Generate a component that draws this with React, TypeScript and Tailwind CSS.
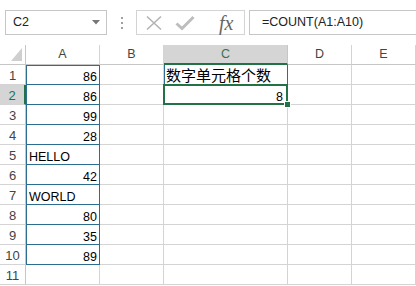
import React from 'react';

const cols = ['A', 'B', 'C', 'D', 'E'];
const colA: (string | number)[] = [86, 86, 99, 28, 'HELLO', 42, 'WORLD', 80, 35, 89, ''];

const blue = 'border-[#2c6e91]';

function Cell({ row, col }: { row: number; col: number }) {
    // col: 0 = A ... 4 = E
    const base = 'h-[20px] border-r border-b flex items-end leading-[14px] text-[12.5px] text-black';
    if (col === 0) {
        const v = colA[row - 1];
        if (row <= 10) {
            const isNum = typeof v === 'number';
            return (
                <div
                    className={`${base} ${blue} ${row === 1 ? 'shadow-[inset_1px_1px_0_#2c6e91]' : 'shadow-[inset_1px_0_0_#2c6e91]'} ${isNum ? 'justify-end pr-[2px]' : 'pl-[3px]'}`}
                >
                    {v}
                </div>
            );
        }
        return <div className={`${base} border-[#d4d4d4]`} />;
    }
    if (col === 2 && row === 1) {
        return (
            <div className={`${base} ${blue} shadow-[inset_1px_0_0_#2c6e91] pl-[2px] pb-[1px] text-[15px] font-['Liberation_Sans','Noto_Sans_CJK_SC',sans-serif]`}>
                数字单元格个数
            </div>
        );
    }
    if (col === 2 && row === 2) {
        return (
            <div className={`${base} border-[#d4d4d4] relative justify-end pr-[4px]`}>
                8
                <div className="absolute left-[-1px] top-[-1px] right-[-1px] bottom-[-1px] border-2 border-[#217346] z-10" />
                <div className="absolute right-[-4px] bottom-[-4px] w-[7px] h-[7px] bg-[#217346] border border-white z-20" />
            </div>
        );
    }
    return <div className={`${base} border-[#d4d4d4]`} />;
}

export default function App() {
    const rows = Array.from({ length: 11 }, (_, i) => i + 1);
    return (
        <div className="w-[416px] h-[286px] bg-white overflow-hidden font-['Liberation_Sans',sans-serif] text-[#222]">
            {/* formula bar */}
            <div className="h-[45px] flex items-start pt-[10px]">
                <div className="ml-[5px] w-[102px] h-[25px] border border-[#c6c6c6] flex items-center pl-[7px] pr-[6px] text-[12.5px]">
                    <span className="flex-1">C2</span>
                    <svg width="8" height="5" viewBox="0 0 8 5">
                        <path d="M0 0 L8 0 L4 4.5 Z" fill="#777" />
                    </svg>
                </div>
                <div className="ml-[14px] mt-[7px] flex flex-col gap-[3px]">
                    <div className="w-[2px] h-[2px] bg-[#a0a0a0]" />
                    <div className="w-[2px] h-[2px] bg-[#a0a0a0]" />
                    <div className="w-[2px] h-[2px] bg-[#a0a0a0]" />
                </div>
                <div className="ml-[13px] w-[109px] h-[25px] border border-[#d4d4d4] flex items-center">
                    <svg className="ml-[8px]" width="18" height="16" viewBox="0 0 18 16">
                        <path d="M2 1.5 L16 14.5 M16 1.5 L2 14.5" stroke="#b4b4b4" strokeWidth="1.6" fill="none" />
                    </svg>
                    <svg className="ml-[12px]" width="20" height="16" viewBox="0 0 20 16">
                        <path d="M1.5 8.5 L7 13.5 L18.5 2" stroke="#bdbdbd" strokeWidth="3" fill="none" />
                    </svg>
                    <span className="ml-[24px] text-[20px] italic text-[#666] font-['Liberation_Serif',serif] leading-none">fx</span>
                </div>
                <div className="ml-[4px] flex-1 h-[25px] border-y border-l border-[#c6c6c6] flex items-center pl-[12px] text-[12.5px]">
                    =COUNT(A1:A10)
                </div>
            </div>

            {/* sheet */}
            <div className="grid grid-cols-[26px_74px_64px_124px_64px_64px]">
                <div className="h-[20px] border-r border-b border-[#c6c6c6] relative">
                    <svg className="absolute left-[11px] top-[3px]" width="12" height="13" viewBox="0 0 12 13">
                        <path d="M11 0 L11 13 L0 13 Z" fill="#cfcfcf" />
                    </svg>
                </div>
                {cols.map((c) =>
                    c === 'C' ? (
                        <div key={c} className="h-[20px] bg-[#d5d5d5] border-r border-[#c6c6c6] border-b-2 border-b-[#217346] flex items-center justify-center text-[12.5px] text-[#3f6f55]">
                            {c}
                        </div>
                    ) : (
                        <div key={c} className="h-[20px] border-r border-b border-[#d4d4d4] border-b-[#c6c6c6] flex items-center justify-center text-[12.5px] text-[#444]">
                            {c}
                        </div>
                    )
                )}
                {rows.map((r) => (
                    <React.Fragment key={r}>
                        {r === 2 ? (
                            <div className="h-[20px] bg-[#d5d5d5] border-r-2 border-r-[#217346] border-b border-b-[#d4d4d4] flex items-end justify-center leading-[14px] pb-[1px] text-[13px] text-[#217346]">
                                {r}
                            </div>
                        ) : (
                            <div className="h-[20px] border-r border-[#c6c6c6] border-b border-b-[#d4d4d4] flex items-end justify-center leading-[14px] pb-[1px] text-[13px] text-[#444]">
                                {r}
                            </div>
                        )}
                        {cols.map((_, ci) => (
                            <Cell key={ci} row={r} col={ci} />
                        ))}
                    </React.Fragment>
                ))}
            </div>
        </div>
    );
}
